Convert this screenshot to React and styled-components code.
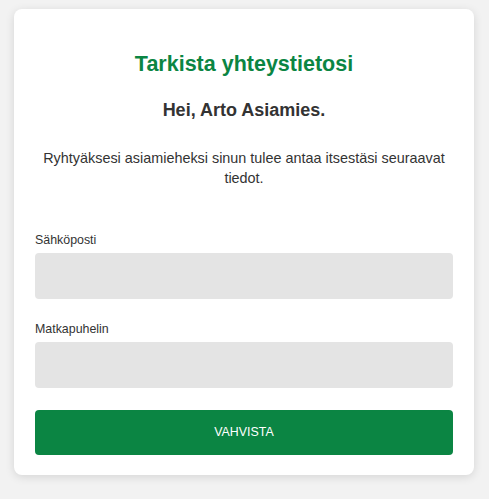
import React from 'react'
import styled, {createGlobalStyle} from 'styled-components'

const GlobalStyle = createGlobalStyle`
  body {
    margin: 0;
    background-color: #f2f2f2;
    font-family: Arial, "Liberation Sans", sans-serif;
  }
`

const Page = styled.div`
  padding: 9px 15px 23px 14px;
`

const Card = styled.div`
  background: #fff;
  border-radius: 8px;
  box-shadow: 0 2px 10px rgba(0, 0, 0, 0.12);
  padding: 42px 21px 20px;
  display: flex;
  flex-direction: column;
`

const Title = styled.h1`
  margin: 0;
  font-size: 21.5px;
  font-weight: bold;
  color: #0b8543;
  text-align: center;
  line-height: 26px;
`

const Greeting = styled.h2`
  margin: 22px 0 0;
  font-size: 18px;
  font-weight: bold;
  color: #333;
  text-align: center;
  line-height: 22px;
`

const Intro = styled.p`
  margin: 26.5px 0 0;
  font-size: 14.4px;
  line-height: 20px;
  color: #333;
  text-align: center;
`

const Form = styled.form`
  margin-top: 44px;
  display: flex;
  flex-direction: column;
`

const Field = styled.div`
  display: flex;
  flex-direction: column;
  margin-bottom: 22px;
`

const Label = styled.label`
  font-size: 12.4px;
  line-height: 16px;
  color: #333;
  margin-bottom: 5.5px;
`

const Input = styled.input`
  height: 45.5px;
  border: none;
  border-radius: 4px;
  background: #e4e4e4;
  padding: 0 12px;
  font-size: 14px;
  box-sizing: border-box;
  outline: none;
`

const Button = styled.button`
  height: 45.5px;
  border: none;
  border-radius: 4px;
  background: #0b8543;
  color: #fff;
  font-family: inherit;
  font-size: 12.4px;
  cursor: pointer;
`

export default function App() {
  return <Page>
    <GlobalStyle/>
    <Card>
      <Title>Tarkista yhteystietosi</Title>
      <Greeting>Hei, Arto Asiamies.</Greeting>
      <Intro>Ryhtyäksesi asiamieheksi sinun tulee antaa itsestäsi seuraavat tiedot.</Intro>
      <Form onSubmit={e => e.preventDefault()}>
        <Field>
          <Label htmlFor="email">Sähköposti</Label>
          <Input id="email" type="email"/>
        </Field>
        <Field>
          <Label htmlFor="phone">Matkapuhelin</Label>
          <Input id="phone" type="tel"/>
        </Field>
        <Button type="submit">VAHVISTA</Button>
      </Form>
    </Card>
  </Page>
}
